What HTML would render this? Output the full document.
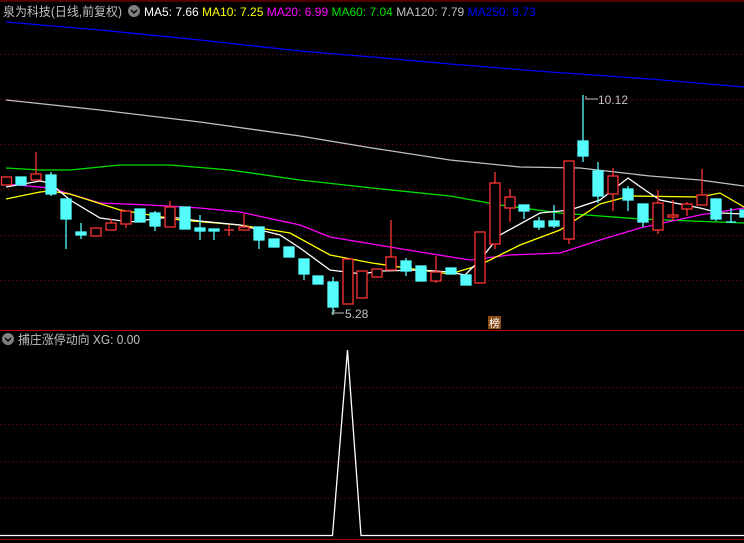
<!DOCTYPE html>
<html><head><meta charset="utf-8"><style>
html,body{margin:0;padding:0;background:#000;width:744px;height:543px;overflow:hidden}
svg{display:block}
text{font-family:"Liberation Sans","Noto Sans CJK SC",sans-serif}
</style></head><body>
<svg width="744" height="543" viewBox="0 0 744 543" xmlns="http://www.w3.org/2000/svg">
<rect width="744" height="543" fill="#000"/>
<line x1="0" y1="1" x2="744" y2="1" stroke="#a00000" stroke-width="1"/>
<g stroke="#8a0000" stroke-width="1" stroke-dasharray="1,3">
<line x1="0" y1="54.5" x2="744" y2="54.5"/><line x1="0" y1="99.5" x2="744" y2="99.5"/>
<line x1="0" y1="144.5" x2="744" y2="144.5"/><line x1="0" y1="189.5" x2="744" y2="189.5"/>
<line x1="0" y1="235.5" x2="744" y2="235.5"/><line x1="0" y1="280.5" x2="744" y2="280.5"/>
<line x1="0" y1="387.5" x2="744" y2="387.5"/><line x1="0" y1="424.5" x2="744" y2="424.5"/>
<line x1="0" y1="461.5" x2="744" y2="461.5"/><line x1="0" y1="498.5" x2="744" y2="498.5"/>
</g>
<line x1="0" y1="330.5" x2="744" y2="330.5" stroke="#c00000"/>
<line x1="0" y1="539.5" x2="744" y2="539.5" stroke="#a00000"/>
<g fill="none" stroke-width="1.3">
<polyline stroke="#0000ff" points="6,22 100,30 200,40 300,51 372,57 450,64 550,72 650,79 744,87"/>
<polyline stroke="#c0c0c0" points="6,100 100,110 200,122 300,136 372,148 450,160 520,167 580,168 650,176 700,180 744,186"/>
<polyline stroke="#00e000" points="6,168 40,170 70,170 120,165 170,165 230,170 300,180 372,188 450,196 500,205 560,213 640,219 744,223"/>
<polyline stroke="#ff00ff" points="6,184 50,188 100,203 150,205 200,208 240,212 300,225 330,237 372,244 420,252 470,260 510,255 560,253 600,240 640,228 700,215 744,208"/>
<polyline stroke="#ffff00" points="6,199 40,192 50,191 70,194 120,210 180,220 240,225 290,233 330,255 372,263 420,270 450,274 480,265 520,245 560,230 600,204 630,196 700,197 720,193 744,207"/>
<polyline stroke="#ffffff" points="6,187 40,181 50,183 70,200 100,218 130,222 170,217 200,221 240,225 280,235 300,248 330,270 362,274 380,271 420,270 450,272 465,275 480,260 500,235 540,213 570,210 600,200 628,178 645,190 660,200 700,208 720,213 744,214"/>
</g>
<g stroke="#ff3333" fill="#000" stroke-width="1.3">
<rect x="1.5" y="177" width="10" height="8"/>
<line x1="36" y1="152" x2="36" y2="174"/><rect x="31" y="174" width="10" height="6"/>
<rect x="91" y="228" width="10" height="8"/>
<line x1="111" y1="219" x2="111" y2="223"/><rect x="106" y="223" width="10" height="7"/>
<line x1="126" y1="224" x2="126" y2="228"/><rect x="121" y="211" width="10" height="13"/>
<line x1="170" y1="201" x2="170" y2="207"/><rect x="165" y="207" width="10" height="20"/>
<line x1="229" y1="225" x2="229" y2="236"/><line x1="224" y1="230" x2="234" y2="230"/>
<line x1="244" y1="214" x2="244" y2="227"/><rect x="239" y="227" width="10" height="3"/>
<rect x="343" y="259" width="10" height="45"/>
<rect x="357" y="271" width="10" height="27"/>
<rect x="372" y="269" width="10" height="8"/>
<line x1="391" y1="220" x2="391" y2="257"/><rect x="386" y="257" width="10" height="13"/>
<line x1="436" y1="256" x2="436" y2="283"/><rect x="431" y="272" width="10" height="9"/>
<rect x="475" y="232" width="10" height="51"/>
<line x1="495" y1="172" x2="495" y2="249"/><rect x="490" y="183" width="10" height="61"/>
<line x1="510" y1="189" x2="510" y2="222"/><rect x="505" y="197" width="10" height="11"/>
<line x1="569" y1="239" x2="569" y2="244"/><rect x="564" y="161" width="10" height="78"/>
<line x1="613" y1="168" x2="613" y2="211"/><rect x="608" y="176" width="10" height="18"/>
<line x1="658" y1="190" x2="658" y2="234"/><rect x="653" y="203" width="10" height="27"/>
<line x1="673" y1="200" x2="673" y2="220"/><rect x="668" y="215" width="10" height="2"/>
<line x1="687" y1="202" x2="687" y2="216"/><rect x="682" y="204" width="10" height="5"/>
<line x1="702" y1="169" x2="702" y2="205"/><rect x="697" y="195" width="10" height="10"/>
</g>
<g stroke="#54fcfc" fill="#54fcfc" stroke-width="1.3">
<rect x="16" y="177" width="10" height="8"/>
<line x1="51" y1="172" x2="51" y2="196"/><rect x="46" y="175" width="10" height="19"/>
<line x1="66" y1="199" x2="66" y2="249"/><rect x="61" y="199" width="10" height="20"/>
<line x1="81" y1="223" x2="81" y2="239"/><rect x="76" y="232" width="10" height="3"/>
<rect x="135" y="209" width="10" height="13"/>
<line x1="155" y1="211" x2="155" y2="231"/><rect x="150" y="213" width="10" height="13"/>
<rect x="180" y="207" width="10" height="22"/>
<line x1="200" y1="215" x2="200" y2="240"/><rect x="195" y="228" width="10" height="3"/>
<line x1="214" y1="229" x2="214" y2="240"/><rect x="209" y="229" width="10" height="2"/>
<line x1="259" y1="227" x2="259" y2="249"/><rect x="254" y="227" width="10" height="13"/>
<rect x="269" y="239" width="10" height="8"/>
<rect x="284" y="247" width="10" height="10"/>
<line x1="304" y1="259" x2="304" y2="280"/><rect x="299" y="259" width="10" height="15"/>
<rect x="313" y="276" width="10" height="8"/>
<line x1="333" y1="277" x2="333" y2="315"/><rect x="328" y="282" width="10" height="25"/>
<line x1="406" y1="258" x2="406" y2="276"/><rect x="401" y="261" width="10" height="10"/>
<rect x="416" y="266" width="10" height="15"/>
<rect x="446" y="268" width="10" height="6"/>
<rect x="461" y="275" width="10" height="10"/>
<line x1="524" y1="205" x2="524" y2="219"/><rect x="519" y="205" width="10" height="6"/>
<line x1="539" y1="217" x2="539" y2="230"/><rect x="534" y="221" width="10" height="6"/>
<line x1="554" y1="205" x2="554" y2="228"/><rect x="549" y="221" width="10" height="5"/>
<line x1="583" y1="95" x2="583" y2="162"/><rect x="578" y="141" width="10" height="15"/>
<line x1="598" y1="162" x2="598" y2="203"/><rect x="593" y="171" width="10" height="25"/>
<line x1="628" y1="186" x2="628" y2="211"/><rect x="623" y="189" width="10" height="11"/>
<line x1="643" y1="204" x2="643" y2="227"/><rect x="638" y="204" width="10" height="18"/>
<line x1="716" y1="199" x2="716" y2="221"/><rect x="711" y="199" width="10" height="20"/>
<line x1="731" y1="208" x2="731" y2="223"/><line x1="726" y1="222" x2="736" y2="222"/>
<rect x="740" y="210" width="6" height="7"/>
</g>
<g stroke="#c0c0c0" fill="none" stroke-width="1"><polyline points="598,99 586,99 586,96"/><polyline points="344,313 332,313 335,310"/></g>
<text x="598" y="104" fill="#c0c0c0" font-size="12">10.12</text>
<text x="345" y="318" fill="#c0c0c0" font-size="12">5.28</text>
<rect x="488" y="316" width="13" height="13" fill="#8b4a14"/>
<text x="489" y="327" fill="#fff" font-size="11">榜</text>
<text x="3" y="16" fill="#c0c0c0" font-size="12.5" textLength="119" lengthAdjust="spacingAndGlyphs">泉为科技(日线,前复权)</text>
<circle cx="134" cy="11" r="6" fill="#808080"/><polyline points="131,10 134,13 137,10" stroke="#000" fill="none" stroke-width="1.5"/>
<text x="144" y="16" font-size="12"><tspan fill="#fff">MA5: 7.66 </tspan><tspan fill="#ffff00">MA10: 7.25 </tspan><tspan fill="#ff00ff">MA20: 6.99 </tspan><tspan fill="#00e000">MA60: 7.04 </tspan><tspan fill="#c0c0c0">MA120: 7.79 </tspan><tspan fill="#0000ff">MA250: 9.73</tspan></text>
<circle cx="8" cy="339" r="6" fill="#808080"/><polyline points="5,338 8,341 11,338" stroke="#000" fill="none" stroke-width="1.5"/>
<text x="18" y="344" fill="#c0c0c0" font-size="12.5" textLength="122" lengthAdjust="spacingAndGlyphs">捕庄涨停动向 XG: 0.00</text>
<polyline points="0,535.5 332.5,535.5 347.5,350 361,535.5 744,535.5" fill="none" stroke="#fff" stroke-width="1.3"/>
</svg>
</body></html>
